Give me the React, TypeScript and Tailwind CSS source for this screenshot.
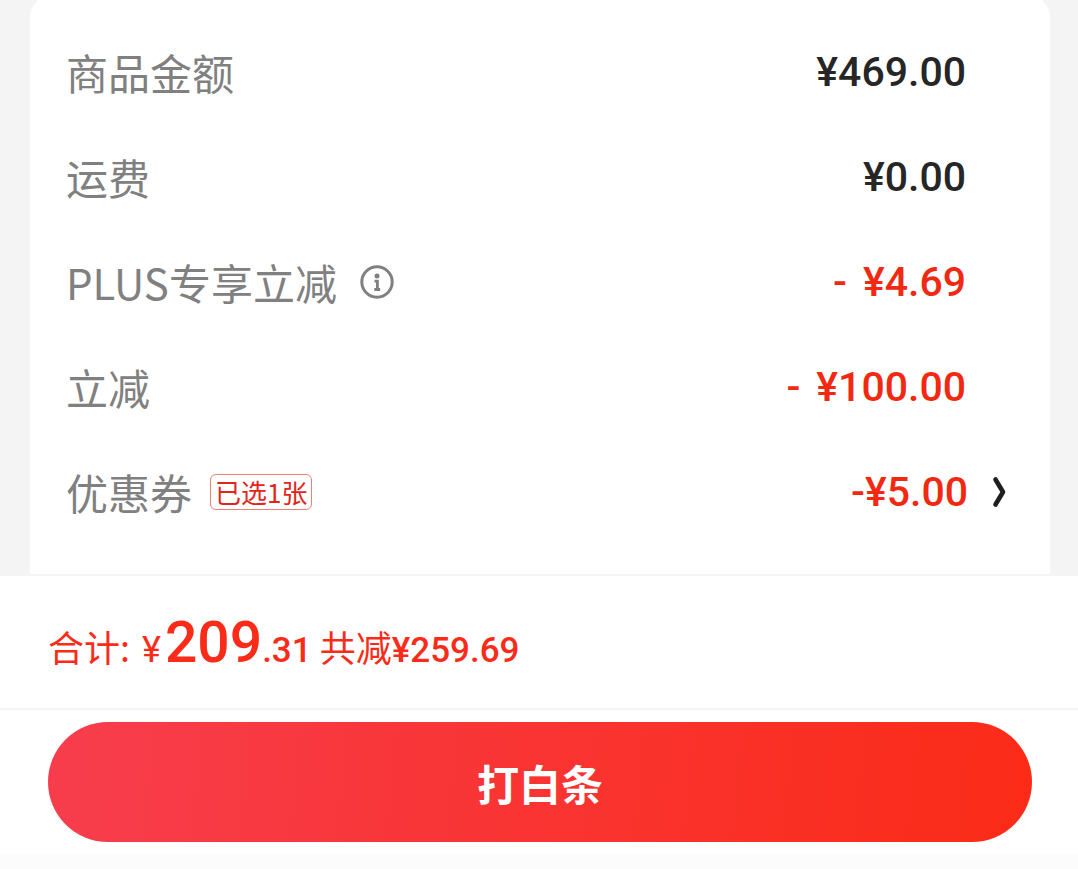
import type { ReactNode } from 'react';

function Row({ label, children }: { label: ReactNode; children: ReactNode }) {
  return (
    <div className="flex h-[105px] items-center justify-between">
      <dt className="flex items-center text-[42px] leading-[60px] text-[#808080]">{label}</dt>
      <dd className="flex items-center font-[Roboto] text-[41px] leading-[60px] font-medium">{children}</dd>
    </div>
  );
}

function InfoIcon() {
  return (
    <svg className="h-9 w-9" viewBox="0 0 36 36" fill="none" stroke="#808080" aria-hidden="true">
      <circle cx="18" cy="18" r="15.2" strokeWidth="3" />
      <path d="M15.500 17.200h2.900v8.500M15.300 25.500h5.800" strokeWidth="2.800" />
      <circle cx="18" cy="12" r="2.500" fill="#808080" stroke="none" />
    </svg>
  );
}

export default function App() {
  return (
    <main className="flex min-h-screen flex-col bg-[#fcfcfc] font-['Noto_Sans_CJK_SC',sans-serif]">
      <section className="bg-[#f4f4f4] pr-7 pl-[30px]">
        <dl className="-mt-1.5 rounded-t-3xl bg-white px-9 pt-[25px] pb-[30px]">
          <Row label="商品金额">
            <span className="mr-12 text-[#262626]">¥469.00</span>
          </Row>
          <Row label="运费">
            <span className="mr-12 text-[#262626]">¥0.00</span>
          </Row>
          <Row
            label={
              <>
                PLUS专享立减
                <button type="button" aria-label="说明" className="ml-[22px]">
                  <InfoIcon />
                </button>
              </>
            }
          >
            <span className="mr-12 flex gap-4 text-[#f22912]">
              <span>-</span>
              <span>¥4.69</span>
            </span>
          </Row>
          <Row label="立减">
            <span className="mr-12 flex gap-4 text-[#f22912]">
              <span>-</span>
              <span>¥100.00</span>
            </span>
          </Row>
          <Row
            label={
              <>
                优惠券
                <span className="ml-[18px] rounded-md border border-[#ec7f78] px-1 text-[26px] leading-[34px] text-[#e1251b]">已选1张</span>
              </>
            }
          >
            <button type="button" className="mr-2 flex items-center gap-6 text-[#f22912]">
              -¥5.00
              <svg className="h-8 w-3.5" viewBox="0 0 14 32" fill="none" stroke="#1f1f1f" strokeWidth="4.600" strokeLinecap="round" strokeLinejoin="round" aria-hidden="true">
                <path d="M3.500 3.500l7.500 12.500-7.500 12.500" />
              </svg>
            </button>
          </Row>
        </dl>
      </section>
      <footer className="border-t-2 border-[#f5f5f5] bg-white">
        <p className="flex h-[134px] items-baseline border-b-2 border-[#f5f5f5] px-12 pt-6 text-[36px] text-[#fa2c19]">
          合计:
          <span className="ml-3 font-[Roboto]">¥</span>
          <strong className="ml-1 font-[Roboto] text-[57px] font-medium">209</strong>
          <span className="mr-2 font-[Roboto] text-[35px] font-medium">.31</span>
          共减
          <span className="font-[Roboto] text-[35px] font-medium">¥259.69</span>
        </p>
        <div className="py-3 pr-[46px] pl-12">
          <button type="button" className="h-[120px] w-full rounded-full bg-linear-[96deg,#f73d4d,#fb2b17] text-[42px] font-bold text-white">
            打白条
          </button>
        </div>
      </footer>
    </main>
  );
}
